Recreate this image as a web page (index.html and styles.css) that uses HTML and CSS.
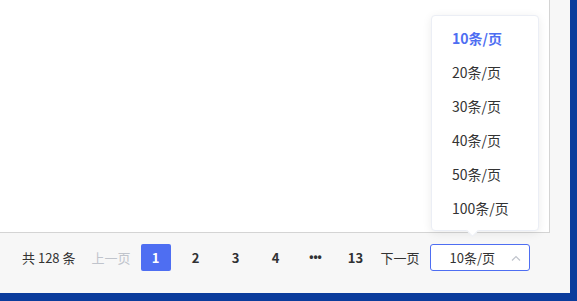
FILE: index.html
```html
<!DOCTYPE html>
<html lang="zh-CN">
<head>
    <meta charset="UTF-8">
    <title>分页</title>
    <link rel="stylesheet" href="styles.css">
</head>
<body>
    <div class="window">
        <div class="content"></div>

        <div class="footer">
            <div class="pager">
                <span class="total">共 128 条</span>
                <span class="prev">上一页</span>
                <span class="page active">1</span>
                <span class="page">2</span>
                <span class="page">3</span>
                <span class="page">4</span>
                <span class="page more">•••</span>
                <span class="page">13</span>
                <span class="next">下一页</span>
                <div class="size-select">
                    <span>10条/页</span>
                    <svg class="chevron" width="10" height="6" viewBox="0 0 10 6">
                        <polyline points="1,5.5 5,1.5 9,5.5" fill="none" stroke="#c0c4cc" stroke-width="1.2"/>
                    </svg>
                </div>
            </div>
        </div>

        <!-- 下拉菜单 -->
        <div class="dropdown">
            <div class="option selected">10条/页</div>
            <div class="option">20条/页</div>
            <div class="option">30条/页</div>
            <div class="option">40条/页</div>
            <div class="option">50条/页</div>
            <div class="option">100条/页</div>
            <span class="arrow"></span>
        </div>
    </div>
</body>
</html>
```

FILE: styles.css
```css
body {
    margin: 0;
    background: #0b3c9c;
    font-family: "Noto Sans CJK SC", "Liberation Sans", sans-serif;
    color: #333;
    width: 577px;
    height: 301px;
    overflow: hidden;
}
.window {
    position: relative;
    width: 570px;
    height: 293px;
    background: #f7f7f7;
    display: flex;
    flex-direction: column;
}
.content {
    width: 549px;
    height: 232px;
    background: #fff;
    border-right: 1px solid #d4d4d4;
    border-bottom: 1px solid #d4d4d4;
}
.footer {
    padding-top: 11px;
}
.pager {
    display: flex;
    align-items: center;
    gap: 10px;
    padding-left: 22px;
    height: 27px;
    font-size: 13px;
}
.total {
    margin-right: 6px;
    color: #333;
}
.prev {
    color: #c0c4cc;
}
.next {
    color: #333;
}
.page {
    width: 30px;
    height: 27px;
    line-height: 27px;
    text-align: center;
    font-weight: bold;
    color: #303133;
    border-radius: 2px;
}
.page.active {
    background: #4e6ef2;
    color: #fff;
}
.page.more {
    font-family: "Liberation Sans", sans-serif;
    font-size: 12px;
}
.size-select {
    box-sizing: border-box;
    width: 100px;
    height: 27px;
    border: 1px solid #4e6ef2;
    border-radius: 3px;
    background: #fff;
    display: flex;
    align-items: center;
    justify-content: space-between;
    padding: 0 8px 0 19px;
    font-size: 13px;
}
.chevron {
    display: block;
}
.dropdown {
    position: absolute;
    left: 431px;
    top: 15px;
    width: 108px;
    box-sizing: border-box;
    padding: 5px 0;
    background: #fff;
    border: 1px solid #ebeef5;
    border-radius: 4px;
    box-shadow: 0 2px 10px rgba(0, 0, 0, 0.08);
}
.option {
    height: 34px;
    line-height: 34px;
    padding-left: 20px;
    font-size: 14px;
    color: #333;
}
.option.selected {
    color: #4e6ef2;
    font-weight: bold;
}
.arrow {
    position: absolute;
    left: 36px;
    bottom: -5px;
    width: 8px;
    height: 8px;
    background: #fff;
    border-right: 1px solid #ebeef5;
    border-bottom: 1px solid #ebeef5;
    transform: rotate(45deg);
}
```
